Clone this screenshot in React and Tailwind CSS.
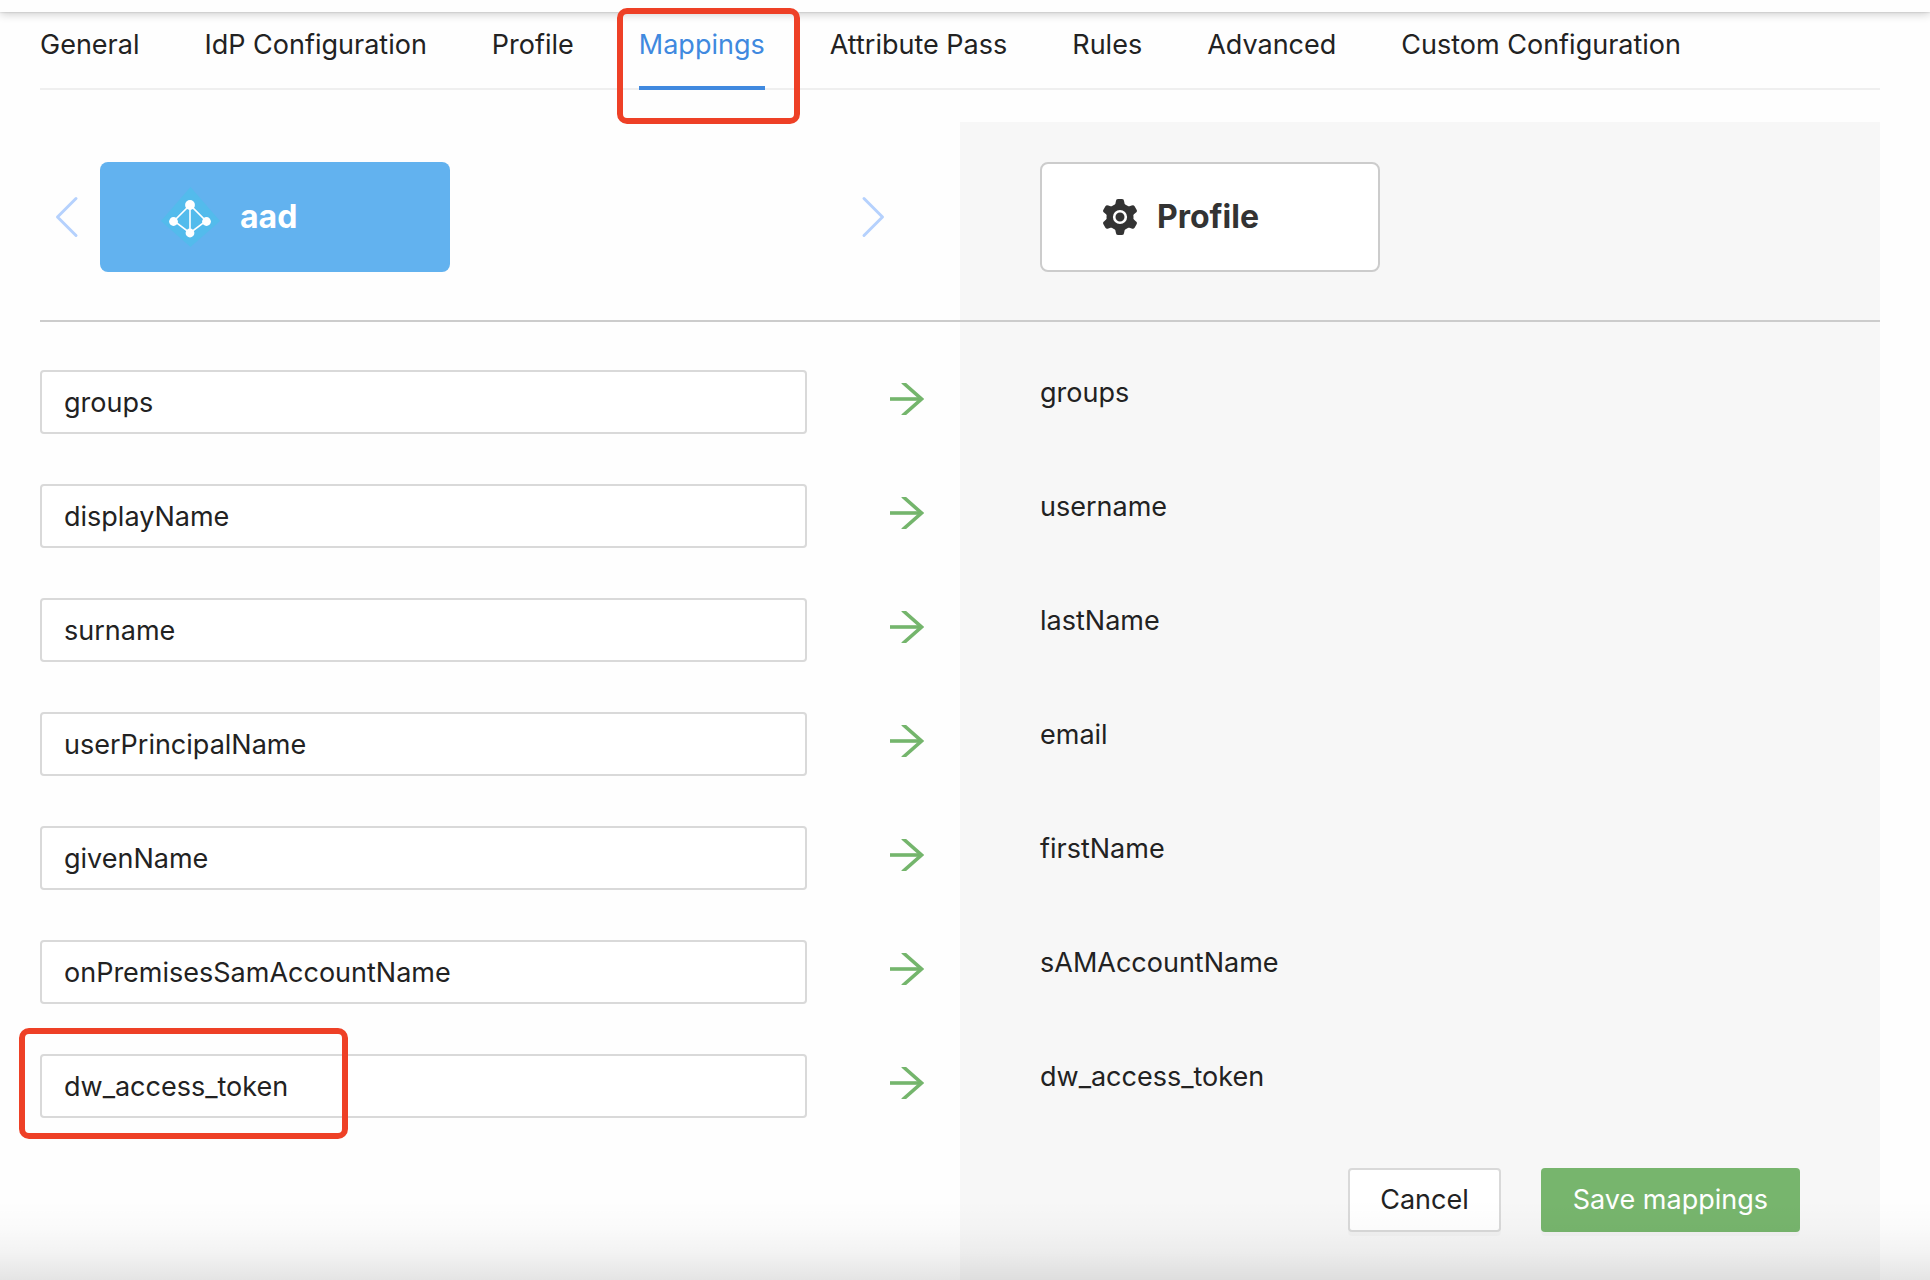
const tabs = ["General", "IdP Configuration", "Profile", "Mappings", "Attribute Pass", "Rules", "Advanced", "Custom Configuration"];

const mappings = [
  ["groups", "groups"],
  ["displayName", "username"],
  ["surname", "lastName"],
  ["userPrincipalName", "email"],
  ["givenName", "firstName"],
  ["onPremisesSamAccountName", "sAMAccountName"],
  ["dw_access_token", "dw_access_token"],
];

function Chevron({ flip }) {
  return (
    <svg width="24" height="42" viewBox="0 0 24 42" className={flip ? "-scale-x-100" : ""} fill="none" stroke="#b5d1fd" strokeWidth="3" strokeLinecap="round" strokeLinejoin="round" aria-hidden="true">
      <path d="M21 2.500 2.500 21 21 39.500" />
    </svg>
  );
}

function Arrow() {
  return (
    <svg width="34" height="32" viewBox="0 0 34 32" className="shrink-0" fill="none" stroke="#74b56c" strokeWidth="3.600" role="img" aria-label="maps to">
      <path d="M0 16h31" />
      <path d="M12.500 -.800 31.500 16 12.500 32.800" />
    </svg>
  );
}

function DirectoryIcon() {
  return (
    <svg width="60" height="60" viewBox="0 0 60 60" className="shrink-0" aria-hidden="true">
      <path d="M30.500 0 60 34 30.500 60 1 34Z" fill="#53bbec" />
      <path d="M30 18 14 34l16 12 16-12L30 18v28" fill="none" stroke="#fff" strokeWidth="1.600" />
      <g fill="#fff">
        <circle cx="30" cy="18" r="4.900" />
        <circle cx="13.500" cy="34.500" r="4.400" />
        <circle cx="46.500" cy="34.500" r="4.400" />
        <circle cx="30" cy="46" r="4.400" />
      </g>
    </svg>
  );
}

function GearIcon() {
  return (
    <svg width="34" height="36" viewBox="0 0 34 36" className="shrink-0" aria-hidden="true">
      <g fill="#333">
        <circle cx="17" cy="18" r="13.500" />
        {[0, 60, 120].map((a) => (
          <path key={a} transform={`rotate(${a} 17 18)`} d="M11 7.500Q12.700 5 12.900 2.200Q13 0 15 0h4Q21 0 21.100 2.200Q21.300 5 23 7.500V28.500Q21.300 31 21.100 33.800Q21 36 19 36h-4Q13 36 12.900 33.800Q12.700 31 11 28.500Z" />
        ))}
      </g>
      <circle cx="17" cy="18" r="5.800" fill="#333" stroke="#fff" strokeWidth="2.600" />
    </svg>
  );
}

export default function App() {
  return (
    <div className="relative flex min-h-screen flex-col bg-[#fefefe] font-['Inter',sans-serif] text-[27px] leading-10 text-[#222]">
      <header className="h-3 shadow-[0_0_2px_rgba(0,0,0,0.2),0_2px_10px_rgba(0,0,0,0.2)]" />

      <main className="flex grow flex-col pr-[50px] pl-10">
        <nav className="flex h-[78px] gap-[65px] border-b-2 border-[#efefef] whitespace-nowrap">
          {tabs.map((tab) =>
            tab === "Mappings" ? (
              <a key={tab} href="#mappings" aria-current="page" className="relative -mb-0.5 border-b-4 border-[#4089df] pt-[13px] text-[#4089df]">
                {tab}
                <span className="pointer-events-none absolute -top-1 -right-[35px] -bottom-[38px] -left-[22px] rounded-[10px] border-[6px] border-[#ee4026]" />
              </a>
            ) : (
              <a key={tab} href={"#" + tab.toLowerCase().replace(" ", "-")} className="pt-[13px]">
                {tab}
              </a>
            )
          )}
        </nav>

        <section className="mt-8 flex grow flex-col bg-[linear-gradient(to_right,transparent_50%,#f7f7f7_50%)]">
          <div className="grid grid-cols-2 border-b-2 border-[#ccc] pt-10 pb-12">
            <div className="flex items-center pr-[75px] pl-[15px]">
              <button type="button" aria-label="Previous source" className="mr-[21px]">
                <Chevron />
              </button>
              <button type="button" className="flex h-[110px] w-[350px] items-center gap-5 rounded-lg bg-[#62b2ef] pl-15 text-[32px] font-bold text-white">
                <DirectoryIcon />
                aad
              </button>
              <button type="button" aria-label="Next source" className="ml-auto">
                <Chevron flip />
              </button>
            </div>
            <div className="pl-20">
              <button type="button" className="flex h-[110px] w-[340px] items-center gap-5 rounded-lg border-2 border-[#ccc] bg-white pl-[61px] text-[32px] font-bold text-[#333]">
                <GearIcon />
                Profile
              </button>
            </div>
          </div>

          <form className="flex flex-col pt-12 pb-12">
            {mappings.map(([source, target]) => (
              <div key={target} className="grid grid-cols-2 pb-[50px]">
                <div className="relative flex pr-9">
                  <input id={target} defaultValue={source} className="h-16 min-w-0 grow rounded border-2 border-[#d9d9d9] bg-white px-[22px]" />
                  <div className="ml-[83px] pt-[13px]">
                    <Arrow />
                  </div>
                  {source === "dw_access_token" && (
                    <span className="pointer-events-none absolute -top-[26px] -left-[21px] h-[111px] w-[329px] rounded-[10px] border-[6px] border-[#ee4026]" />
                  )}
                </div>
                <label htmlFor={target} className="pt-[3px] pl-20">
                  {target}
                </label>
              </div>
            ))}
            <div className="flex justify-end gap-10 pr-20">
              <button type="button" className="h-16 rounded border-2 border-[#d9d9d9] bg-white px-[30px] shadow-[0_4px_0_rgba(0,0,0,0.02)]">
                Cancel
              </button>
              <button type="submit" className="h-16 rounded bg-[#77b56d] px-8 text-white shadow-[0_4px_0_rgba(0,0,0,0.02)]">
                Save mappings
              </button>
            </div>
          </form>
        </section>
      </main>

      <div className="pointer-events-none absolute inset-x-0 bottom-0 h-20 bg-[linear-gradient(to_top,rgba(0,0,0,0.1),rgba(0,0,0,0.045)_35%,rgba(0,0,0,0.015)_65%,transparent)]" />
    </div>
  );
}
